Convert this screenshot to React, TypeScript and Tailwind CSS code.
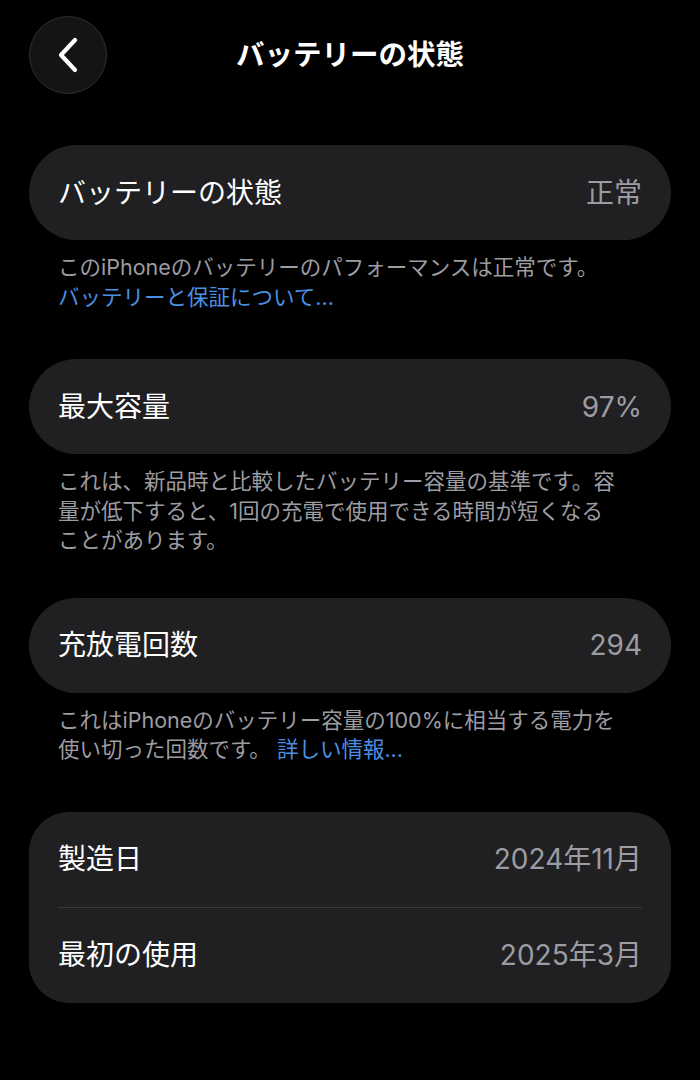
const font = { fontFamily: 'Inter, "Noto Sans CJK JP", "Noto Sans", sans-serif' };

function Row({ label, value }: { label: string; value: string }) {
  return (
    <div className="flex h-[95px] items-center justify-between px-[29px]">
      <span className="text-[28px] text-white">{label}</span>
      <span className="text-[28px] text-[#9c9ca2]">{value}</span>
    </div>
  );
}

function Footer({ children }: { children: React.ReactNode }) {
  return (
    <p className="mt-[13px] px-[29px] text-[21.5px] leading-[29.5px] text-[#9c9ca2]">{children}</p>
  );
}

export default function App() {
  return (
    <div className="min-h-[1080px] w-[700px] bg-black px-[29px] pt-[16px]" style={font}>
      {/* header */}
      <div className="grid grid-cols-[78px_1fr_78px] items-center">
        <button className="flex h-[78px] w-[78px] items-center justify-center rounded-full border border-[#2e2e30] bg-[#141415]">
          <svg width="30" height="40" viewBox="0 0 30 40" fill="none">
            <path d="M22 5 L8 20 L22 35" stroke="white" strokeWidth="4.2" strokeLinecap="round" strokeLinejoin="round" />
          </svg>
        </button>
        <h1 className="text-center text-[28.5px] font-bold text-white">バッテリーの状態</h1>
        <div />
      </div>

      <div className="mt-[51px] rounded-full bg-[#202022]">
        <Row label="バッテリーの状態" value="正常" />
      </div>
      <Footer>
        このiPhoneのバッテリーのパフォーマンスは正常です。
        <br />
        <span className="text-[#4a90e2]">バッテリーと保証について...</span>
      </Footer>

      <div className="mt-[47px] rounded-full bg-[#202022]">
        <Row label="最大容量" value="97%" />
      </div>
      <Footer>
        これは、新品時と比較したバッテリー容量の基準です。容
        <br />
        量が低下すると、1回の充電で使用できる時間が短くなる
        <br />
        ことがあります。
      </Footer>

      <div className="mt-[42px] rounded-full bg-[#202022]">
        <Row label="充放電回数" value="294" />
      </div>
      <Footer>
        これはiPhoneのバッテリー容量の100%に相当する電力を
        <br />
        使い切った回数です。 <span className="text-[#4a90e2]">詳しい情報...</span>
      </Footer>

      <div className="mt-[47px] rounded-[40px] bg-[#202022]">
        <Row label="製造日" value="2024年11月" />
        <div className="mx-[29px] h-px bg-[#3a3a3c]" />
        <Row label="最初の使用" value="2025年3月" />
      </div>
    </div>
  );
}
